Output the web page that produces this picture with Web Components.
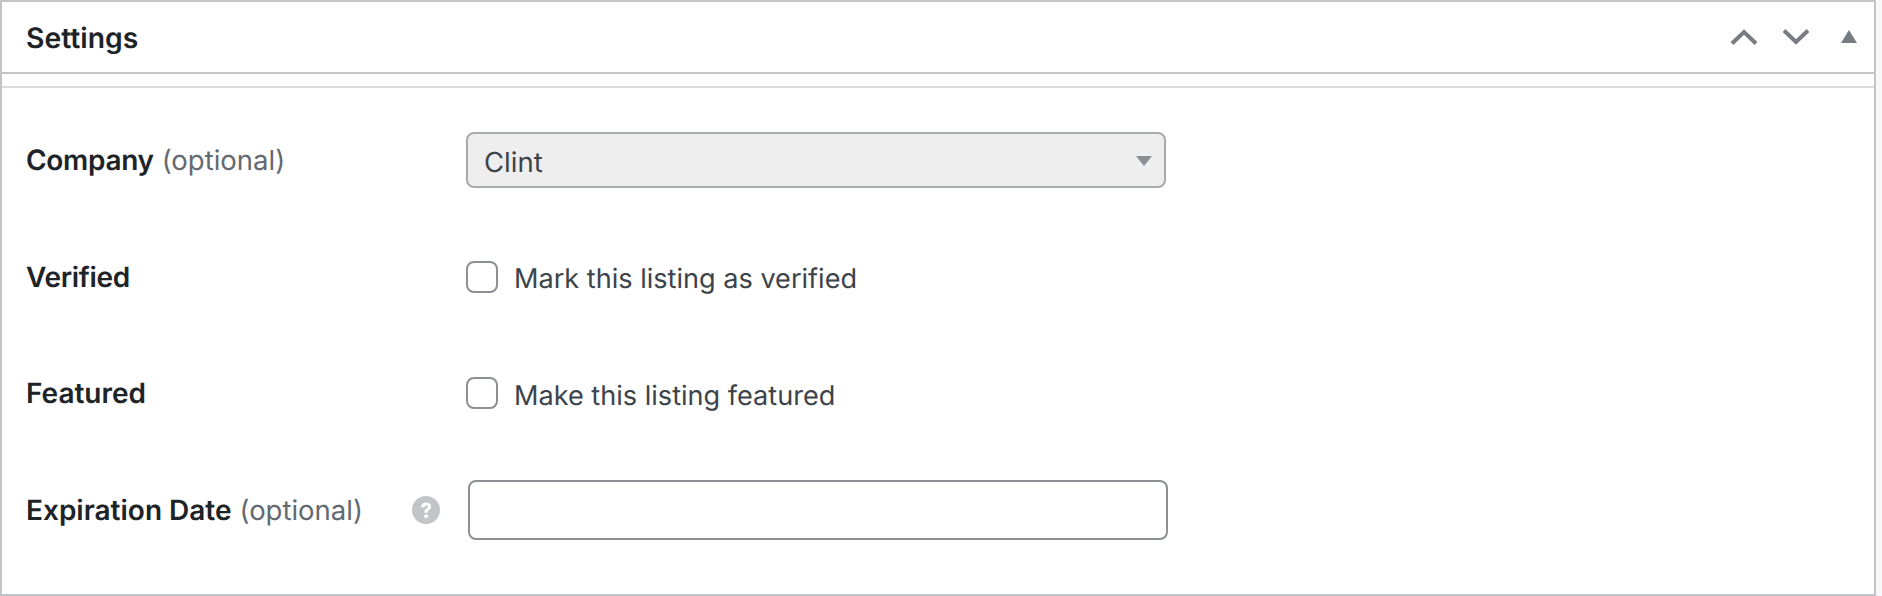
<!DOCTYPE html>
<html lang="en"><head><meta charset="utf-8"><title>Settings</title>
<style>
html,body{margin:0;padding:0;background:#f8f8f8;height:596px;overflow:hidden}
body{font-family:Inter,"Liberation Sans",sans-serif;text-rendering:geometricPrecision}
</style></head><body>
<meta-box>
  <settings-row label="Company" optional tight><fake-select value="Clint"></fake-select></settings-row>
  <settings-row label="Verified" tight><check-field text="Mark this listing as verified"></check-field></settings-row>
  <settings-row label="Featured"><check-field text="Make this listing featured"></check-field></settings-row>
  <settings-row label="Expiration Date" optional help><date-input></date-input></settings-row>
</meta-box>
<script>
function shadow(el,html){el.attachShadow({mode:'open'}).innerHTML=html;}
customElements.define('meta-box',class extends HTMLElement{constructor(){super();shadow(this,`<style>
:host{display:block;box-sizing:border-box;width:1876px;height:596px;background:#fff;border:2px solid #c3c4c7}
header{box-sizing:border-box;height:72px;border-bottom:2px solid #c3c4c7;display:flex;align-items:center;padding:0 0 0 24px}
h2{margin:2px 0 0;flex:1;font-size:28.300px;font-weight:600;color:#1d2327;line-height:1}
.ctl{display:flex;align-items:center;margin-right:17px}
.sep{height:12px;border-bottom:2px solid #dcdcde}
.body{padding:14px 0 0 24px;display:flex;flex-direction:column}
svg{display:block}
</style><header><h2>Settings</h2><div class="ctl">
<svg width="30" height="18" viewBox="0 0 30 18" style="margin-right:22px"><path d="M3 15.500 15 4l12 11.500" fill="none" stroke="#787c82" stroke-width="4"/></svg>
<svg width="30" height="18" viewBox="0 0 30 18" style="margin-right:30px"><path d="M3 2.500 15 14 27 2.500" fill="none" stroke="#787c82" stroke-width="4"/></svg>
<svg width="16" height="14" viewBox="0 0 16 14"><path d="M8 0 16 13H0z" fill="#787c82"/></svg>
</div></header><div class="sep"></div><div class="body"><slot></slot></div>`);}});
customElements.define('settings-row',class extends HTMLElement{constructor(){super();
const o=this.hasAttribute('optional')?' <span>(optional)</span>':'';
const h=this.hasAttribute('help')?`<svg width="28" height="28" viewBox="0 0 28 28"><circle cx="14" cy="14" r="14" fill="#c3c4c7"/><path d="M9 11.200c.2-3 2.200-4.700 5.200-4.700 3 0 5 1.700 5 4.100 0 1.900-1 2.900-2.300 3.700-1 .7-1.400 1.200-1.400 2.400h-3.200c0-2.200.7-3.200 2.100-4.100 1-.7 1.500-1.100 1.500-1.800 0-.8-.6-1.300-1.600-1.300-1.100 0-1.700.7-1.800 1.900z" fill="#fff"/><circle cx="14.100" cy="20.300" r="2" fill="#fff"/></svg>`:'';
const ls=this.hasAttribute('tight')?'-.3px':'0';
shadow(this,`<style>
:host{display:flex;align-items:center;height:116.500px}
.l{box-sizing:border-box;width:440px;display:flex;align-items:center;justify-content:space-between;padding-right:26px;font-size:28px;color:#1d2327}
b{font-weight:600;letter-spacing:${ls}}span{color:#646970;font-weight:400;font-size:27.500px}
</style><div class="l"><div><b>${this.getAttribute('label')}</b>${o}</div>${h}</div><slot></slot>`);}});
customElements.define('fake-select',class extends HTMLElement{constructor(){super();shadow(this,`<style>
:host{display:flex;box-sizing:border-box;width:700px;height:56px;align-items:center;justify-content:space-between;background:#eee;border:2px solid #a7aaad;border-radius:8px;padding:4px 12px 0 16px;font-size:27.500px;color:#3c434a}
svg{display:block;margin-top:-2px}
</style><span>${this.getAttribute('value')}</span><svg width="16" height="10" viewBox="0 0 16 10"><path d="M0 0H16L8 10z" fill="#8c8f94"/></svg>`);}});
customElements.define('check-field',class extends HTMLElement{constructor(){super();shadow(this,`<style>
:host{display:flex;align-items:center;height:32px;font-size:27.100px;color:#3c434a}
i{display:block;box-sizing:border-box;width:32px;height:32px;border:2px solid #8c8f94;border-radius:8px;background:#fff;margin-right:16px}
span{padding-top:4px}
</style><i></i><span>${this.getAttribute('text')}</span>`);}});
customElements.define('date-input',class extends HTMLElement{constructor(){super();shadow(this,`<style>
:host{display:block;box-sizing:border-box;width:700px;height:60px;margin-left:2px;background:#fff;border:2px solid #8c8f94;border-radius:8px}
</style>`);}});
</script></body></html>
